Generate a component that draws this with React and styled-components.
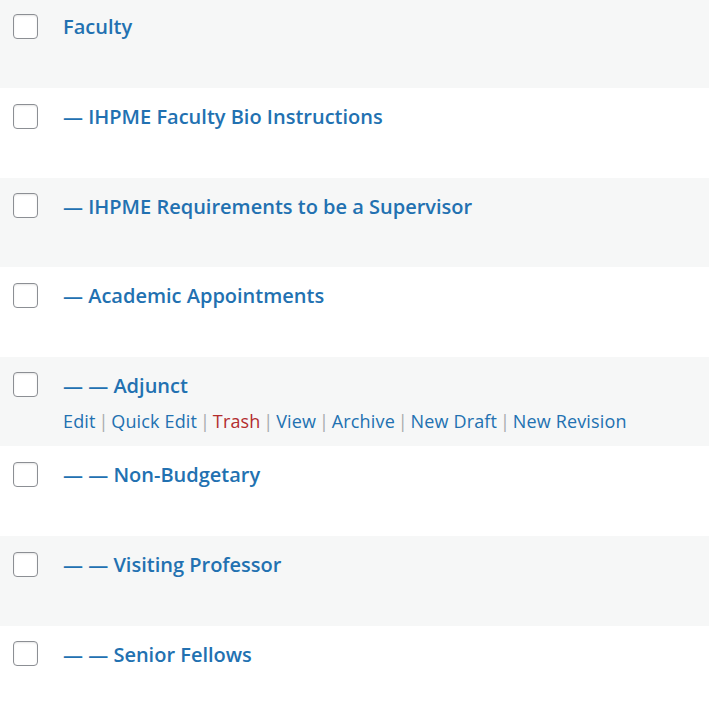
import React from "react";
import styled, { createGlobalStyle } from "styled-components";

const GlobalStyle = createGlobalStyle`
  body {
    margin: 0;
    background: #fff;
    font-family: "Open Sans", "Noto Sans", sans-serif;
  }
`;

const Table = styled.div`
  margin-top: -1.6px;
  width: 709px;
`;

const Row = styled.div`
  display: flex;
  align-items: flex-start;
  height: 89.6px;
  background: ${(p) => (p.$alt ? "#f6f7f7" : "#fff")};
`;

const CheckCell = styled.div`
  padding: 15.6px 0 0 13px;
  width: 50px;
  flex-shrink: 0;
`;

const Box = styled.span`
  display: block;
  width: 25px;
  height: 25px;
  box-sizing: border-box;
  border: 1px solid #8c8f94;
  border-radius: 4px;
  background: #fff;
  box-shadow: inset 0 1px 2px rgba(0, 0, 0, 0.1);
`;

const Content = styled.div`
  padding-top: 13px;
`;

const Title = styled.a`
  display: block;
  font-size: 20px;
  line-height: 32px;
  font-weight: 600;
  color: #2271b1;
  text-decoration: none;
`;

const Actions = styled.div`
  font-size: 18px;
  line-height: 28px;
  margin-top: 5px;
  color: #a7aaad;
  letter-spacing: 0.15px;
  word-spacing: -2px;
`;

const Action = styled.a`
  color: ${(p) => (p.$danger ? "#b32d2e" : "#2271b1")};
  text-decoration: none;
  word-spacing: 0;
`;

const pages = [
  "Faculty",
  "— IHPME Faculty Bio Instructions",
  "— IHPME Requirements to be a Supervisor",
  "— Academic Appointments",
  "— — Adjunct",
  "— — Non-Budgetary",
  "— — Visiting Professor",
  "— — Senior Fellows",
];

const actions = ["Edit", "Quick Edit", "Trash", "View", "Archive", "New Draft", "New Revision"];

export default function App() {
  return (
    <>
      <GlobalStyle />
      <Table>
        {pages.map((title, i) => (
          <Row key={title} $alt={i % 2 === 0}>
            <CheckCell>
              <Box />
            </CheckCell>
            <Content>
              <Title href="#">{title}</Title>
              {i === 4 && (
                <Actions>
                  {actions.map((a, j) => (
                    <React.Fragment key={a}>
                      {j > 0 && " | "}
                      <Action href="#" $danger={a === "Trash"}>
                        {a}
                      </Action>
                    </React.Fragment>
                  ))}
                </Actions>
              )}
            </Content>
          </Row>
        ))}
      </Table>
    </>
  );
}
